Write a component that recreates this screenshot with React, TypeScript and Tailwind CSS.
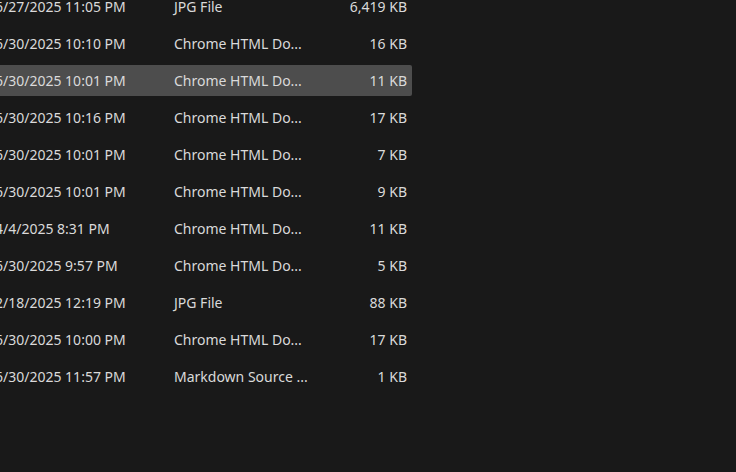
const rows = [
  { date: "6/27/2025 11:05 PM", type: "JPG File", size: "6,419 KB" },
  { date: "6/30/2025 10:10 PM", type: "Chrome HTML Do...", size: "16 KB" },
  { date: "6/30/2025 10:01 PM", type: "Chrome HTML Do...", size: "11 KB", selected: true },
  { date: "6/30/2025 10:16 PM", type: "Chrome HTML Do...", size: "17 KB" },
  { date: "6/30/2025 10:01 PM", type: "Chrome HTML Do...", size: "7 KB" },
  { date: "6/30/2025 10:01 PM", type: "Chrome HTML Do...", size: "9 KB" },
  { date: "4/4/2025 8:31 PM", type: "Chrome HTML Do...", size: "11 KB" },
  { date: "6/30/2025 9:57 PM", type: "Chrome HTML Do...", size: "5 KB" },
  { date: "2/18/2025 12:19 PM", type: "JPG File", size: "88 KB" },
  { date: "6/30/2025 10:00 PM", type: "Chrome HTML Do...", size: "17 KB" },
  { date: "6/30/2025 11:57 PM", type: "Markdown Source ...", size: "1 KB" },
];

export default function App() {
  return (
    <div
      className="h-[472px] w-[736px] overflow-hidden bg-[#191919] text-[14px] text-[#dadada]"
      style={{ fontFamily: '"Noto Sans", "Open Sans", sans-serif' }}
    >
      <div className="-ml-[20px] -mt-[9px] flex w-[432px] flex-col gap-[6px]">
        {rows.map((row, i) => (
          <div
            key={i}
            className={`flex h-[31px] items-center rounded-[2px] pr-[5px] ${
              row.selected ? "bg-[#4d4d4d]" : ""
            }`}
          >
            <span className="w-[194px] shrink-0 whitespace-nowrap pl-[15px]">{row.date}</span>
            <span className="w-[150px] shrink-0 whitespace-nowrap">{row.type}</span>
            <span className="flex-1 whitespace-nowrap text-right">{row.size}</span>
          </div>
        ))}
      </div>
    </div>
  );
}
